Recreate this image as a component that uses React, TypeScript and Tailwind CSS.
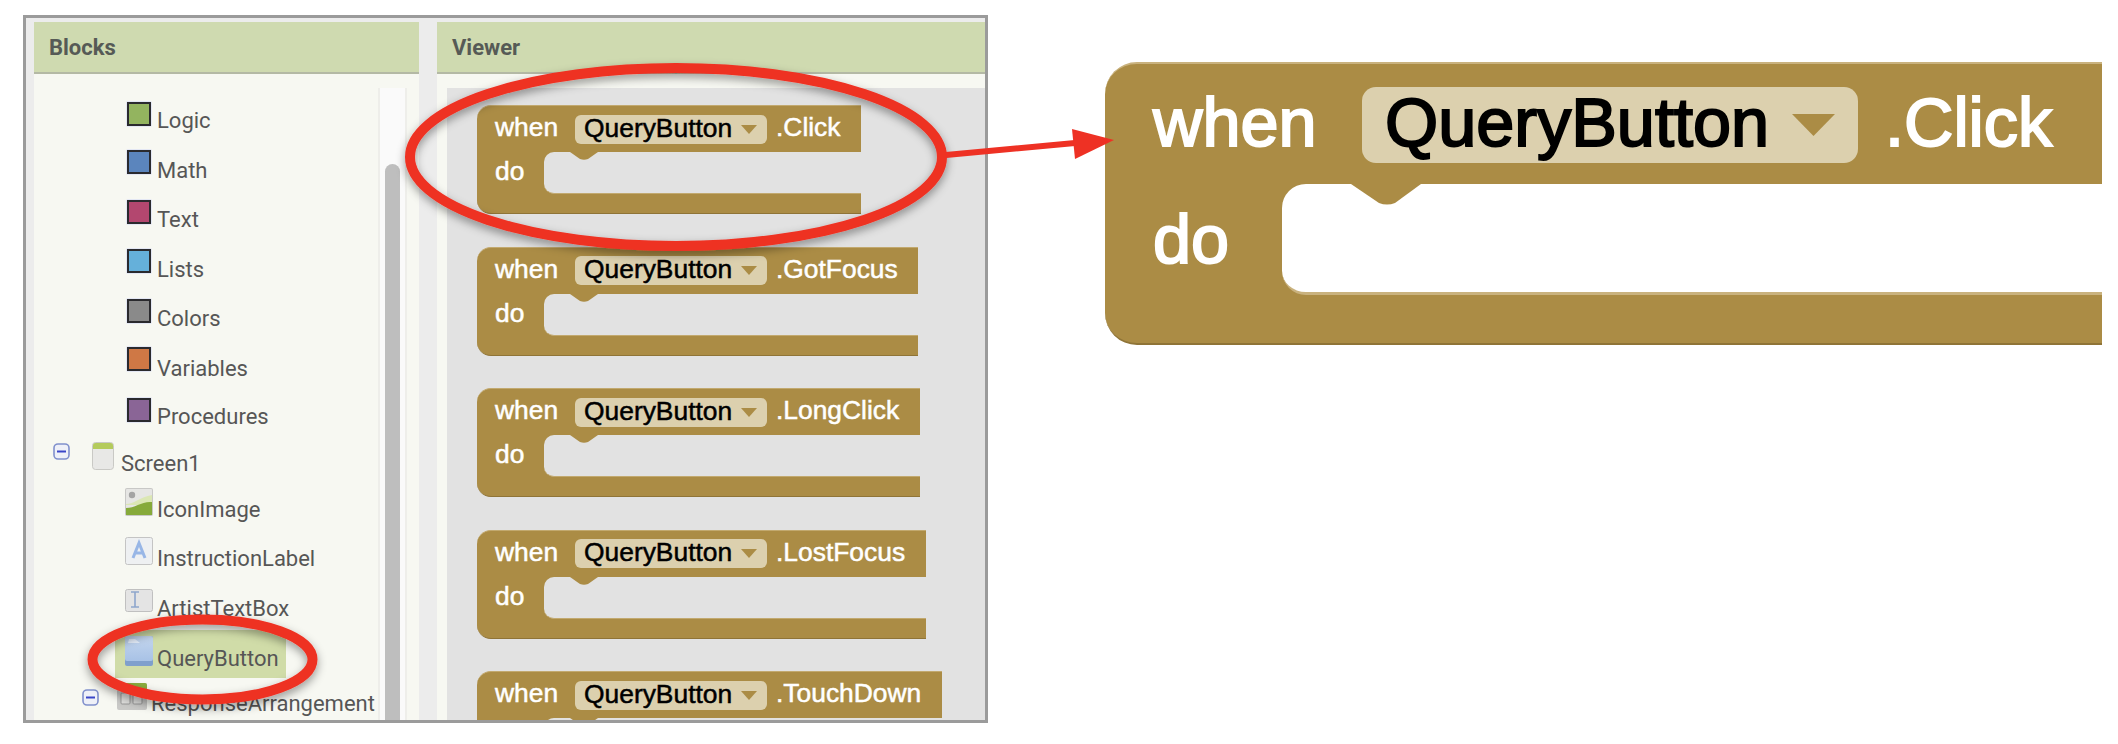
import React from "react";

const font = { fontFamily: '"Liberation Sans", Arial, sans-serif' };

function Swatch({ bg }: { bg: string }) {
  return (
    <div className="w-[26px] h-[26px] rounded-[2px] bg-[#e3e7f4] p-[1px] shrink-0">
      <div className={`w-full h-full border-2 border-[#2a2a2e] ${bg}`} />
    </div>
  );
}

function Minus() {
  return (
    <svg width="17" height="17" viewBox="0 0 17 17" className="shrink-0">
      <rect x="1" y="1" width="15" height="15" rx="4" fill="#eef0f8" stroke="#8090cc" strokeWidth="1.6" />
      <rect x="4" y="7.500" width="9" height="2" fill="#3a46c8" />
    </svg>
  );
}

function ScreenIcon() {
  return (
    <svg width="22" height="28" viewBox="0 0 22 28" className="shrink-0">
      <rect x="0.500" y="0.500" width="21" height="27" rx="3" fill="#e8e8e6" stroke="#c9c9c5" />
      <path d="M1 7V3.500A2.500 2.500 0 0 1 3.500 1h15A2.500 2.500 0 0 1 21 3.500V7z" fill="#b4cb5c" />
    </svg>
  );
}

function ImageIcon() {
  return (
    <svg width="28" height="28" viewBox="0 0 28 28" className="shrink-0">
      <rect width="28" height="28" rx="2" fill="#c8c8c6" />
      <rect x="1" y="1" width="26" height="26" rx="1" fill="#e6e6e4" />
      <circle cx="7" cy="7" r="3.200" fill="#a4a4a4" />
      <path d="M1 16C9 16 15 9 27 7V17H1z" fill="#dbe7b4" />
      <path d="M1 27V20C10 20 17 13 27 14V27z" fill="#86aa3a" />
    </svg>
  );
}

function LabelIcon() {
  return (
    <svg width="28" height="28" viewBox="0 0 28 28" className="shrink-0">
      <rect x="0.500" y="0.500" width="27" height="27" rx="2" fill="#eef0f2" stroke="#c4c4c4" />
      <path d="M8 21L14 6L20 21M10.500 16H17.500" fill="none" stroke="#98b6e6" strokeWidth="3" />
    </svg>
  );
}

function TextBoxIcon() {
  return (
    <svg width="28" height="23" viewBox="0 0 28 23" className="shrink-0">
      <rect x="0.500" y="0.500" width="27" height="22" rx="2" fill="#e4e4e4" stroke="#c0c0c0" />
      <path d="M6 3H14M6 18H14M10 3V18" fill="none" stroke="#8ea6cc" strokeWidth="1.600" />
    </svg>
  );
}

function ButtonIcon() {
  return (
    <svg width="28" height="30" viewBox="0 0 28 30" className="shrink-0">
      <defs>
        <linearGradient id="btn" x1="0" y1="0" x2="0" y2="1">
          <stop offset="0" stopColor="#c4d6ee" />
          <stop offset="1" stopColor="#a8c2e6" />
        </linearGradient>
      </defs>
      <rect width="28" height="30" rx="2" fill="#7f9fcc" />
      <rect width="28" height="25" rx="2" fill="url(#btn)" />
      <path d="M3 7H15L10 3H4z" fill="#e2ebf8" />
    </svg>
  );
}

function ArrangementIcon() {
  return (
    <svg width="30" height="27" viewBox="0 0 30 27" className="shrink-0">
      <rect width="30" height="27" rx="2" fill="#c9c9c7" />
      <path d="M0 2A2 2 0 0 1 2 0H28A2 2 0 0 1 30 2V7H0z" fill="#8bad3e" />
      <rect x="4" y="10" width="9" height="11" rx="1" fill="#e0e0de" stroke="#999" />
      <rect x="16" y="10" width="9" height="11" rx="1" fill="#e0e0de" stroke="#999" />
    </svg>
  );
}

const leaves = [
  { label: "Logic", bg: "bg-[#93b45f]", row: "h-[50px]", up: "mt-0" },
  { label: "Math", bg: "bg-[#5b85bd]", row: "h-[49px]", up: "-mt-[2px]" },
  { label: "Text", bg: "bg-[#b3476f]", row: "h-[50px]", up: "-mt-[1px]" },
  { label: "Lists", bg: "bg-[#65b0da]", row: "h-[49px]", up: "-mt-[2px]" },
  { label: "Colors", bg: "bg-[#8a8a8a]", row: "h-[50px]", up: "-mt-[1px]" },
  { label: "Variables", bg: "bg-[#cf7845]", row: "h-[48px]", up: "-mt-[3px]" },
  { label: "Procedures", bg: "bg-[#8a6596]", row: "h-[47px]", up: "mt-0" },
];

const text = "text-[22px] leading-[24px] text-[#565656] whitespace-nowrap pt-[8px] font-['Roboto',sans-serif]";

function Tree() {
  return (
    <div className="flex-1 pt-[27px] min-w-0">
      {leaves.map((l) => (
        <div key={l.label} className={`flex items-start ${l.row} pl-[92px]`}>
          <div className={l.up}><Swatch bg={l.bg} /></div>
          <span className={`${text} ml-[5px]`}>{l.label}</span>
        </div>
      ))}
      <div className="flex items-start h-[46px] pl-[19px]">
        <div className="-mt-[1px]"><Minus /></div>
        <div className="ml-[22px] -mt-[2px]"><ScreenIcon /></div>
        <span className={`${text} ml-[7px]`}>Screen1</span>
      </div>
      <div className="flex items-start h-[49px] pl-[91px]">
        <div className="-mt-[2px]"><ImageIcon /></div>
        <span className={`${text} ml-[4px]`}>IconImage</span>
      </div>
      <div className="flex items-start h-[50px] pl-[91px]">
        <div className="-mt-[2px]"><LabelIcon /></div>
        <span className={`${text} ml-[4px]`}>InstructionLabel</span>
      </div>
      <div className="flex items-start h-[50px] pl-[91px]">
        <TextBoxIcon />
        <span className={`${text} ml-[4px]`}>ArtistTextBox</span>
      </div>
      <div className="flex items-start h-[45px] pl-[81px]">
        <div className="flex items-start w-[171px] h-[48px] -mt-[9px] bg-[#d0dca8] pl-[10px] pt-[6px]">
          <ButtonIcon />
          <span className={`${text} ml-[4px] -mt-[6px] pt-[17px]`}>QueryButton</span>
        </div>
      </div>
      <div className="flex items-start pl-[48px]">
        <div className="mt-[5px]"><Minus /></div>
        <div className="ml-[18px] -mt-[1px]"><ArrangementIcon /></div>
        <span className={`${text} ml-[4px]`}>ResponseArrangement</span>
      </div>
    </div>
  );
}

function Scrollbar() {
  return (
    <div className="w-[29px] mt-[14px] mr-[12px] bg-[#fafafa] border-x-2 border-[#eeeeea] px-[5px] pt-[76px] shrink-0">
      <div className="w-[15px] h-full bg-[#bebebe] rounded-t-[8px]" />
    </div>
  );
}

function Header({ title }: { title: string }) {
  return (
    <div className="h-[52px] shrink-0 bg-[#cfdab0] border-b-2 border-[#b4b9a5] flex items-center text-[22px] font-bold text-[#565a56] pl-[15px] font-['Roboto',sans-serif]">
      {title}
    </div>
  );
}

function Block({ event, w, big = false }: { event: string; w: string; big?: boolean }) {
  if (big) {
    return (
      <div className="w-[997px] shrink-0">
        <div className="h-[122px] bg-[#ab8c45] border-t-2 border-[#c9b27e] rounded-tl-[32px] flex items-center pl-[48px] text-[68.400px] text-white [-webkit-text-stroke:2px_currentColor]">
          <span className="w-[209px] leading-none -mt-[4px]">when</span>
          <div className="w-[496px] h-[76px] mt-[2px] rounded-[14px] bg-[#dcd0ae] flex items-center pl-[23px] text-black shrink-0">
            <span className="leading-none -mt-[6px]">QueryButton</span>
            <svg width="43" height="22" viewBox="0 0 43 22" className="ml-[23px] shrink-0"><path d="M0 0H43L21.500 22z" fill="#ab8c45" /></svg>
          </div>
          <span className="ml-[27px] leading-none -mt-[4px]">.Click</span>
        </div>
        <div className="h-[111px] bg-[#ab8c45] flex relative">
          <div className="w-[177px] pl-[48px] text-[68.400px] leading-none text-white flex items-center shrink-0 [-webkit-text-stroke:2px_currentColor]">do</div>
          <div className="flex-1 bg-white rounded-l-[24px] border-b-[3px] border-[#c9b27e]" />
          <svg width="70" height="21" viewBox="0 0 70 21" className="absolute left-[246px] top-0"><path d="M0 0H70L44 19Q36 22 28 19z" fill="#ab8c45" /></svg>
        </div>
        <div className="h-[50px] bg-[#ab8c45] border-b-2 border-[#8f7437] rounded-bl-[32px]" />
      </div>
    );
  }
  return (
    <div className={`${w} shrink-0`}>
      <div className="h-[47px] bg-[#ab8c45] border-t border-[#c2a96f] rounded-tl-[14px] flex items-center pl-[18px] text-[26.400px] text-white [-webkit-text-stroke:0.5px_currentColor]">
        <span className="w-[80px] leading-none -mt-[3px]">when</span>
        <div className="w-[192px] h-[29px] rounded-[6px] bg-[#dcd0ae] flex items-center pl-[9px] text-black shrink-0">
          <span className="leading-none -mt-[2px]">QueryButton</span>
          <svg width="16" height="9" viewBox="0 0 16 9" className="ml-[9px] shrink-0"><path d="M0 0H16L8 9z" fill="#ab8c45" /></svg>
        </div>
        <span className="ml-[9px] leading-none whitespace-nowrap -mt-[3px]">{event}</span>
      </div>
      <div className="h-[42px] bg-[#ab8c45] flex relative">
        <div className="w-[67px] pl-[18px] text-[26.400px] leading-none text-white flex items-center shrink-0 -mt-[3px] [-webkit-text-stroke:0.5px_currentColor]">do</div>
        <div className="flex-1 bg-[#e2e2e2] rounded-l-[10px] border-b border-[#c2a96f]" />
        <svg width="28" height="8" viewBox="0 0 28 8" className="absolute left-[93px] top-0"><path d="M0 0H28L18 7Q14 8.500 10 7z" fill="#ab8c45" /></svg>
      </div>
      <div className="h-[20px] bg-[#ab8c45] border-b border-[#8f7437] rounded-bl-[14px]" />
    </div>
  );
}

function Overlay() {
  return (
    <svg width="2118" height="744" viewBox="0 0 2118 744" className="absolute left-0 top-0 pointer-events-none">
      <defs>
        <filter id="sh" x="-10%" y="-20%" width="120%" height="140%">
          <feDropShadow dx="0" dy="4" stdDeviation="5" floodColor="#000" floodOpacity="0.4" />
        </filter>
      </defs>
      <g fill="none" stroke="#ee3124" strokeWidth="10" filter="url(#sh)">
        <ellipse cx="676" cy="157" rx="266" ry="89" />
        <ellipse cx="202.500" cy="659.500" rx="110" ry="40" />
      </g>
      <path d="M946 155L1075 143" stroke="#ee3124" strokeWidth="6" fill="none" />
      <path d="M1072 129L1114 140L1075 159z" fill="#ee3124" />
    </svg>
  );
}

export default function App() {
  return (
    <div className="relative w-[2118px] h-[744px] bg-white overflow-hidden" style={font}>
      <div className="flex h-full">
        <div className="w-[988px] shrink-0 pl-[23px] pt-[15px] pb-[21px]">
          <div className="flex h-full border-[3px] border-[#9b9b9b] bg-[#ececec] pl-[8px] pt-[4px]">
            <div className="w-[385px] shrink-0 flex flex-col bg-[#f7f8f2]">
              <Header title="Blocks" />
              <div className="flex flex-1 min-h-0">
                <Tree />
                <Scrollbar />
              </div>
            </div>
            <div className="w-[18px] shrink-0" />
            <div className="flex-1 min-w-0 flex flex-col bg-[#f7f8f2]">
              <Header title="Viewer" />
              <div className="flex-1 min-h-0 pl-[10px] pt-[14px] overflow-hidden">
                <div className="h-full bg-[#e2e2e2] pl-[30px] pt-[17px] flex flex-col gap-[32.500px] overflow-hidden">
                  <Block event=".Click" w="w-[384px]" />
                  <Block event=".GotFocus" w="w-[441px]" />
                  <Block event=".LongClick" w="w-[443px]" />
                  <Block event=".LostFocus" w="w-[449px]" />
                  <Block event=".TouchDown" w="w-[465px]" />
                </div>
              </div>
            </div>
          </div>
        </div>
        <div className="pl-[117px] pt-[62px]">
          <Block event=".Click" w="" big />
        </div>
      </div>
      <Overlay />
    </div>
  );
}
